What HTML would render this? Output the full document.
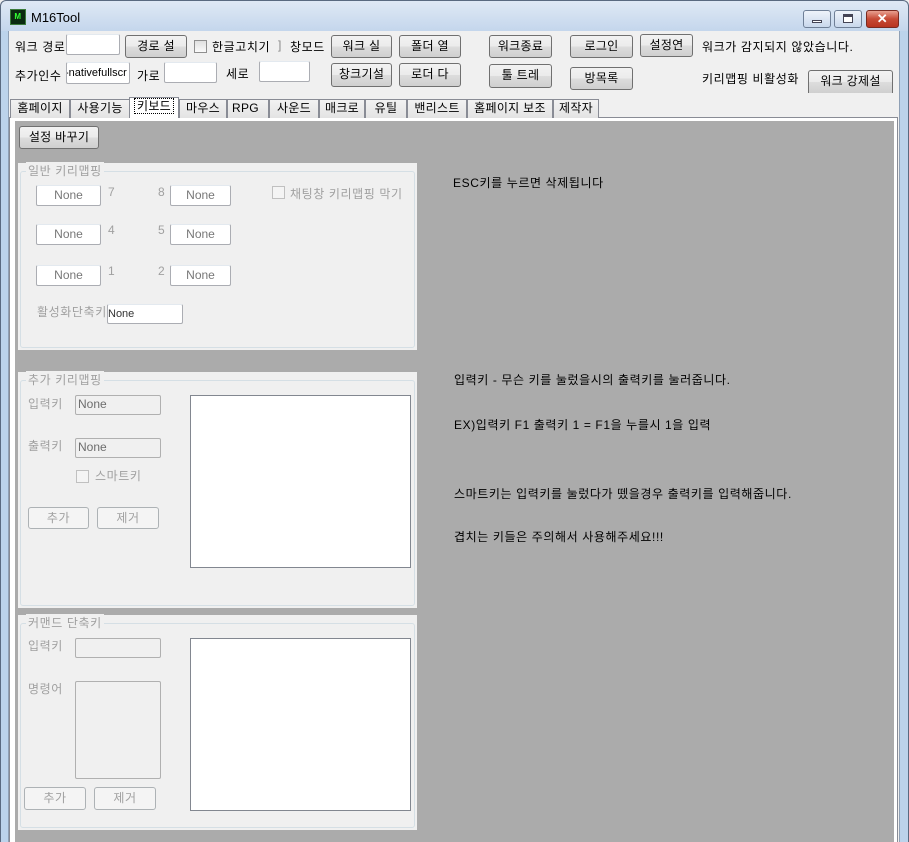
<!DOCTYPE html>
<html><head><meta charset="utf-8"><style>
*{margin:0;padding:0;box-sizing:border-box}
body{width:909px;height:842px;overflow:hidden;position:relative;background:#f0f0f0;font-family:"Liberation Sans","Noto Sans CJK KR","NanumGothic",sans-serif;font-size:12px;color:#000;letter-spacing:0.6px}
.a{position:absolute;white-space:nowrap}
.btn{position:absolute;border:1px solid #707070;border-radius:3px;background:linear-gradient(#f2f2f2,#ebebeb 50%,#dddddd 51%,#cfcfcf);text-align:center;font-size:12px;line-height:20px;letter-spacing:0.3px}
.dbtn{position:absolute;border:1px solid #adb2b5;border-radius:3px;background:#f4f4f4;text-align:center;color:#a0a0a0;line-height:20px}
.inp{position:absolute;background:#fff;border:1px solid #abadb3;border-top-color:#e3e9ef;border-radius:2px;letter-spacing:0}
.dinp{position:absolute;background:#f0f0f0;border:1px solid #b0b0b0;border-radius:2px;color:#6d6d6d;padding-left:2px;line-height:17px;letter-spacing:0}
.grp{position:absolute;background:#f0f0f0}
.grp .f{position:absolute;left:2px;right:2px;top:8px;bottom:2px;border:1px solid #d5dfe5;border-radius:3px}
.grp .t{position:absolute;left:8px;top:-1px;background:#f0f0f0;padding:0 2px;color:#a0a0a0}
.g{color:#a0a0a0}
.tab{position:absolute;top:99px;height:19px;border:1px solid #898c95;border-bottom:none;background:linear-gradient(#f2f2f2,#e3e3e3);text-align:center;line-height:17px;letter-spacing:0.3px}
.cb{position:absolute;width:13px;height:13px;border:1px solid #8f8f8f;background:linear-gradient(#e0e0e0,#fafafa)}
.lst{position:absolute;background:#fff;border:1px solid #828790}
</style></head><body>
<div class="a" style="left:0;top:0;width:909px;height:31px;background:linear-gradient(#dfe9f5,#c4d6ec);border:1px solid #5a6a80;border-bottom:none;border-radius:6px 6px 0 0"></div>
<div class="a" style="left:0;top:31px;width:9px;height:811px;background:#bcd3eb;border-left:1px solid #5a6a80;border-right:1px solid #8fa0b5"></div>
<div class="a" style="left:899px;top:31px;width:10px;height:811px;background:#bcd3eb;border-right:1px solid #5a6a80;border-left:1px solid #8fa0b5"></div>
<div class="a" style="left:10px;top:9px;width:16px;height:16px;background:#0a2a10;border:1px solid #3a7a3a;color:#3f3;font-size:8px;line-height:14px;font-weight:bold;text-align:center">M</div>
<div class="a" style="left:31px;top:10px;font-size:13px;letter-spacing:0">M16Tool</div>
<div class="a" style="left:803px;top:10px;width:28px;height:18px;border:1px solid #6f7f96;border-radius:3px;background:linear-gradient(#eef3fa,#c9d8ec)"><div class="a" style="left:8px;top:9px;width:10px;height:3px;background:#fff;border:1px solid #445"></div></div>
<div class="a" style="left:834px;top:10px;width:28px;height:18px;border:1px solid #6f7f96;border-radius:3px;background:linear-gradient(#eef3fa,#c9d8ec)"><div class="a" style="left:8px;top:3px;width:10px;height:9px;border:1px solid #445;border-top-width:3px;background:#fff"></div></div>
<div class="a" style="left:866px;top:10px;width:33px;height:18px;border:1px solid #7a2a20;border-radius:3px;background:linear-gradient(#e8a090,#c74a35 50%,#b83420);color:#fff;font-weight:bold;text-align:center;line-height:16px;font-size:13px">✕</div>

<div class="a" style="left:15px;top:38px">워크 경로</div>
<div class="inp" style="left:66px;top:34px;width:54px;height:21px"></div>
<div class="btn" style="left:125px;top:35px;width:62px;height:23px">경로 설</div>
<div class="cb" style="left:194px;top:40px"></div>
<div class="a" style="left:212px;top:38px">한글고치기</div>
<div class="a" style="left:278px;top:38px;color:#888">]</div>
<div class="a" style="left:290px;top:38px">창모드</div>
<div class="btn" style="left:331px;top:35px;width:61px;height:23px">워크 실</div>
<div class="btn" style="left:399px;top:35px;width:62px;height:23px">폴더 열</div>
<div class="btn" style="left:489px;top:35px;width:63px;height:23px">워크종료</div>
<div class="btn" style="left:570px;top:35px;width:63px;height:23px">로그인</div>
<div class="btn" style="left:640px;top:34px;width:53px;height:23px">설정연</div>
<div class="a" style="left:702px;top:38px">워크가 감지되지 않았습니다.</div>

<div class="a" style="left:15px;top:67px">추가인수</div>
<div class="inp" style="left:66px;top:62px;width:64px;height:22px;overflow:hidden;font-size:11px;line-height:20px;text-indent:-2px">-nativefullscr</div>
<div class="a" style="left:137px;top:67px">가로</div>
<div class="inp" style="left:164px;top:62px;width:53px;height:21px"></div>
<div class="a" style="left:226px;top:65px">세로</div>
<div class="inp" style="left:259px;top:61px;width:51px;height:21px"></div>
<div class="btn" style="left:331px;top:63px;width:61px;height:24px">창크기설</div>
<div class="btn" style="left:399px;top:63px;width:62px;height:24px">로더 다</div>
<div class="btn" style="left:489px;top:64px;width:63px;height:24px">툴 트레</div>
<div class="btn" style="left:570px;top:67px;width:63px;height:23px">방목록</div>
<div class="a" style="left:702px;top:70px">키리맵핑 비활성화</div>
<div class="btn" style="left:808px;top:70px;width:85px;height:23px;border-bottom:none;border-radius:3px 3px 0 0">워크 강제설</div>

<div class="a" style="left:9px;top:117px;width:889px;height:725px;background:#fff;border:1px solid #898c95;border-bottom:none"></div>
<div class="a" style="left:15px;top:121px;width:879px;height:721px;background:#ababab"></div>
<div class="tab" style="left:10px;width:60px">홈페이지</div>
<div class="tab" style="left:70px;width:60px">사용기능</div>
<div class="tab" style="left:129px;top:97px;height:21px;width:50px;background:#fff;z-index:2"><span style="border:1px dotted #000;padding:0 2px">키보드</span></div>
<div class="tab" style="left:179px;width:48px">마우스</div>
<div class="tab" style="left:227px;width:42px;text-align:left;padding-left:4px">RPG</div>
<div class="tab" style="left:269px;width:50px">사운드</div>
<div class="tab" style="left:319px;width:46px">매크로</div>
<div class="tab" style="left:365px;width:42px">유틸</div>
<div class="tab" style="left:407px;width:60px">밴리스트</div>
<div class="tab" style="left:467px;width:86px">홈페이지 보조</div>
<div class="tab" style="left:553px;width:46px">제작자</div>
<div class="a" style="left:130px;top:117px;width:48px;height:2px;background:#fff;z-index:3"></div>

<div class="btn" style="left:19px;top:126px;width:80px;height:23px">설정 바꾸기</div>

<div class="grp" style="left:18px;top:163px;width:399px;height:187px"><div class="f"></div><div class="t">일반 키리맵핑</div></div>
<div class="inp" style="left:36px;top:185px;width:65px;height:21px;text-align:center;line-height:18px;color:#777">None</div>
<div class="a g" style="left:108px;top:185px">7</div>
<div class="a g" style="left:158px;top:185px">8</div>
<div class="inp" style="left:170px;top:185px;width:61px;height:21px;text-align:center;line-height:18px;color:#777">None</div>
<div class="inp" style="left:36px;top:224px;width:65px;height:21px;text-align:center;line-height:18px;color:#777">None</div>
<div class="a g" style="left:108px;top:223px">4</div>
<div class="a g" style="left:158px;top:223px">5</div>
<div class="inp" style="left:170px;top:224px;width:61px;height:21px;text-align:center;line-height:18px;color:#777">None</div>
<div class="inp" style="left:36px;top:265px;width:65px;height:21px;text-align:center;line-height:18px;color:#777">None</div>
<div class="a g" style="left:108px;top:264px">1</div>
<div class="a g" style="left:158px;top:264px">2</div>
<div class="inp" style="left:170px;top:265px;width:61px;height:21px;text-align:center;line-height:18px;color:#777">None</div>
<div class="cb" style="left:272px;top:186px;border-color:#c0c0c0;background:#f4f4f4"></div>
<div class="a g" style="left:290px;top:185px">채팅창 키리맵핑 막기</div>
<div class="a g" style="left:37px;top:303px">활성화단축키</div>
<div class="inp" style="left:107px;top:304px;width:76px;height:20px;font-size:11px;line-height:18px;color:#333">None</div>

<div class="grp" style="left:18px;top:372px;width:399px;height:236px"><div class="f"></div><div class="t">추가 키리맵핑</div></div>
<div class="a g" style="left:28px;top:395px">입력키</div>
<div class="dinp" style="left:75px;top:395px;width:86px;height:20px">None</div>
<div class="a g" style="left:28px;top:437px">출력키</div>
<div class="dinp" style="left:75px;top:438px;width:86px;height:20px">None</div>
<div class="cb" style="left:76px;top:470px;border-color:#c0c0c0;background:#f4f4f4"></div>
<div class="a g" style="left:95px;top:467px">스마트키</div>
<div class="dbtn" style="left:28px;top:507px;width:61px;height:22px">추가</div>
<div class="dbtn" style="left:97px;top:507px;width:62px;height:22px">제거</div>
<div class="lst" style="left:190px;top:395px;width:221px;height:173px"></div>

<div class="grp" style="left:18px;top:615px;width:399px;height:215px"><div class="f"></div><div class="t">커맨드 단축키</div></div>
<div class="a g" style="left:28px;top:637px">입력키</div>
<div class="dinp" style="left:75px;top:638px;width:86px;height:20px"></div>
<div class="a g" style="left:28px;top:680px">명령어</div>
<div class="dinp" style="left:75px;top:681px;width:86px;height:98px"></div>
<div class="dbtn" style="left:24px;top:787px;width:62px;height:23px">추가</div>
<div class="dbtn" style="left:94px;top:787px;width:62px;height:23px">제거</div>
<div class="lst" style="left:190px;top:638px;width:221px;height:173px"></div>

<div class="a" style="left:453px;top:174px">ESC키를 누르면 삭제됩니다</div>
<div class="a" style="left:454px;top:371px">입력키 - 무슨 키를 눌렀을시의 출력키를 눌러줍니다.</div>
<div class="a" style="left:454px;top:416px">EX)입력키 F1 출력키 1 = F1을 누를시 1을 입력</div>
<div class="a" style="left:454px;top:485px">스마트키는 입력키를 눌렀다가 뗐을경우 출력키를 입력해줍니다.</div>
<div class="a" style="left:454px;top:528px">겹치는 키들은 주의해서 사용해주세요!!!</div>
</body></html>
